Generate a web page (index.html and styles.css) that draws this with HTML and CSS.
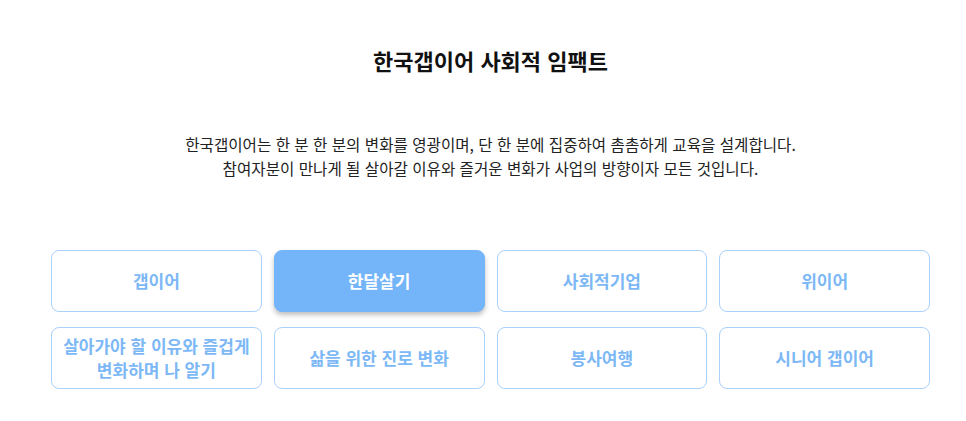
FILE: index.html
```html
<!DOCTYPE html>
<html lang="ko">
<head>
    <meta charset="UTF-8">
    <meta name="viewport" content="width=device-width, initial-scale=1.0">
    <title>한국갭이어 사회적 임팩트</title>
    <link rel="stylesheet" href="styles.css">
</head>
<body>
    <div class="page">
        <div class="inner">
            <h2 class="title">한국갭이어 사회적 임팩트</h2>
            <p class="desc">
                한국갭이어는 한 분 한 분의 변화를 영광이며, 단 한 분에 집중하여 촘촘하게 교육을 설계합니다.<br>
                참여자분이 만나게 될 살아갈 이유와 즐거운 변화가 사업의 방향이자 모든 것입니다.
            </p>
            <ul class="tabs">
                <li class="tab">갭이어</li>
                <li class="tab on">한달살기</li>
                <li class="tab">사회적기업</li>
                <li class="tab">위이어</li>
                <li class="tab">살아가야 할 이유와 즐겁게<br>변화하며 나 알기</li>
                <li class="tab">삶을 위한 진로 변화</li>
                <li class="tab">봉사여행</li>
                <li class="tab">시니어 갭이어</li>
            </ul>
        </div>
    </div>
</body>
</html>
```

FILE: styles.css
```css
* {
    margin: 0;
    padding: 0;
    list-style: none;
}
body {
    background-color: #fff;
    font-family: "Noto Sans CJK KR", "Noto Sans", sans-serif;
    color: #222;
}
.page {
    padding-left: 15px;
}
.inner {
    width: 879px;
    margin: 0 auto;
    padding-top: 45px;
}
.title {
    font-size: 22px;
    line-height: 30px;
    font-weight: 700;
    text-align: center;
    color: #111;
}
.desc {
    margin-top: 57px;
    font-size: 15.6px;
    line-height: 24px;
    text-align: center;
    color: #222;
}
.tabs {
    display: grid;
    grid-template-columns: repeat(4, 1fr);
    gap: 15px 12px;
    margin-top: 70px;
}
.tab {
    display: flex;
    align-items: center;
    justify-content: center;
    height: 62px;
    box-sizing: border-box;
    border: 1px solid #a9d1fb;
    border-radius: 8px;
    background-color: #fff;
    color: #7cb8f6;
    font-size: 17px;
    font-weight: 700;
    line-height: 24px;
    text-align: center;
}
.tab.on {
    background-color: #74b5fa;
    border-color: #74b5fa;
    color: #fff;
    box-shadow: 0 3px 5px rgba(0, 0, 0, 0.25);
}
```
